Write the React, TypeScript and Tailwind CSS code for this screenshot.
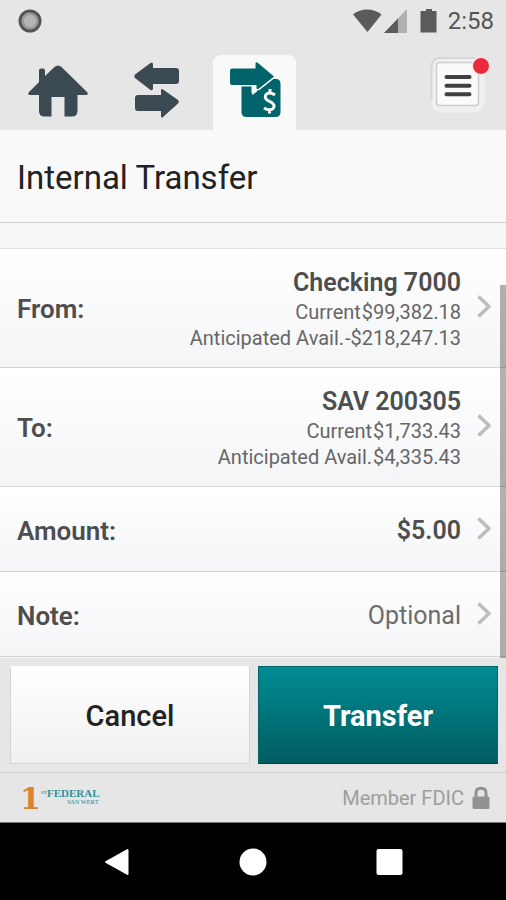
import type { ReactNode } from "react";

interface Balance {
  label: string;
  amount: string;
}

interface AccountRowProps {
  label: string;
  name: string;
  balances: Balance[];
}

const fromBalances: Balance[] = [
  { label: "Current", amount: "$99,382.18" },
  { label: "Anticipated Avail.", amount: "-$218,247.13" },
];

const toBalances: Balance[] = [
  { label: "Current", amount: "$1,733.43" },
  { label: "Anticipated Avail.", amount: "$4,335.43" },
];

function StatusBar() {
  return (
    <div className="flex h-[42px] items-center justify-between pl-[18px] pr-3">
      <svg className="h-6 w-6" viewBox="0 0 24 24" aria-hidden="true">
        <circle cx="12" cy="12" r="10" fill="#a9a9a9" stroke="#555" strokeWidth="3" />
        <circle cx="12" cy="12" r="7" fill="#b4b4b4" stroke="#959595" strokeWidth="1.500" />
      </svg>
      <div className="flex items-center">
        <svg className="h-6 w-[88px]" viewBox="0 0 88 24" aria-hidden="true">
          <path d="M1 5.500C9-1.200 21-1.200 29.500 5.500L15.500 23Z" fill="#5b5b5b" />
          <path d="M55 0V24H32Z" fill="#b0b0b0" />
          <path d="M46 9.400V24H32Z" fill="#5b5b5b" />
          <path d="M74 0h6v2h4.500v21.500h-16V2H74Z" fill="#5b5b5b" />
        </svg>
        <span className="ml-2 text-2xl text-[#555]">2:58</span>
      </div>
    </div>
  );
}

function TopTabs() {
  return (
    <nav className="flex h-[88px] items-end">
      <a href="#home" aria-label="Home" className="ml-[27px] mb-[13px]">
        <svg className="h-[54px] w-[62px]" viewBox="0 0 62 54">
          <path
            d="M12 19V7.500Q12 5.500 14 5.500H16Q18 5.500 18 7.500V13L27.500 4Q31 0.800 34.500 4L60 29Q62 32 59 32H50.500V48Q50.500 53.500 45 53.500H37.500V34H24.500V53.500H17.500Q12 53.500 12 48V32H3Q0 32 2 29Z"
            fill="#3b4953"
          />
        </svg>
      </a>
      <a href="#transfers" aria-label="Transfers" className="ml-11 mb-3">
        <svg className="h-[58px] w-12" viewBox="0 0 48 58">
          <path
            d="M2 14.500Q0.500 16.500 2 18L17.500 30Q20 31 20 28.500V24H43Q46 24 46 21V11Q46 8 43 8H20V4.500Q20 1.500 17.500 3Z"
            fill="#3b4953"
          />
          <path
            d="M45 43.500Q46.500 41.500 45 40L30 29.500Q28 28 28 30.500V35H5Q2 35 2 38V48Q2 51 5 51H28V56Q28 58.500 30 57Z"
            fill="#3b4953"
          />
        </svg>
      </a>
      <a
        href="#internal-transfer"
        aria-label="Internal transfer"
        aria-current="page"
        className="ml-8 flex h-[75px] w-[83px] items-start justify-center rounded-t-lg bg-[#f9f9f9] pt-1"
      >
        <svg className="h-[60px] w-[54px]" viewBox="0 0 54 60">
          <path
            d="M13.500 27H36L45 20H48Q52.500 20 52.500 25V53Q52.500 58 47.500 58H18.500Q13.500 58 13.500 53Z"
            fill="#00646a"
          />
          <path d="M23.500 26H29V32.500L24.500 36L23.500 33Z" fill="#f9f9f9" />
          <path
            d="M4 9.500H27.500V4.500Q28 2.500 30 4L46 17.500L31 29.500Q28.500 31 28.500 28.500V26H4Q2 26 2 24V11.500Q2 9.500 4 9.500Z"
            fill="#00646a"
            stroke="#f9f9f9"
            strokeWidth="3"
            paintOrder="stroke"
          />
          <path
            d="M47 36Q42 32.500 38.500 35Q35.500 38.500 39.500 41.200L44 43.800Q48 47 44.500 50Q40.500 52 36 49M42 30V34.500M41.500 50.500V54.500"
            fill="none"
            stroke="#f9f9f9"
            strokeWidth="3"
          />
        </svg>
      </a>
      <button type="button" aria-label="Menu" className="relative mb-[17px] ml-auto mr-5">
        <svg className="h-[58px] w-[60px]" viewBox="0 0 60 58">
          <rect x="5" y="2.500" width="53.500" height="55" rx="10" fill="#f0f0f0" />
          <path d="M5.500 46V13Q5.500 3 15 3H49" fill="none" stroke="#d6d6d6" strokeWidth="2" />
          <rect x="10.500" y="7.500" width="42" height="43" rx="3" fill="#fafafa" stroke="#cdcdcd" strokeWidth="1.500" />
          <path
            d="M20.500 22H43.500M20.500 30.700H43.500M20.500 39.300H43.500"
            stroke="#404040"
            strokeWidth="4"
            strokeLinecap="round"
          />
        </svg>
        <span className="absolute -right-1 top-0.5 h-[18px] w-[18px] rounded-full border border-[#f4f4f4] bg-[#e92b3c]" />
      </button>
    </nav>
  );
}

function Chevron() {
  return (
    <svg className="h-6 w-4 shrink-0" viewBox="0 0 16 24" aria-hidden="true">
      <path
        d="M2.500 1.500L13 11.500L2.500 21.500"
        fill="none"
        stroke="#bdbdbd"
        strokeWidth="3.600"
        strokeLinejoin="round"
      />
    </svg>
  );
}

function Row({ label, className, children }: { label: string; className: string; children: ReactNode }) {
  return (
    <button
      type="button"
      className={`flex w-full items-center border-b border-[#d3d5d6] bg-linear-to-b from-white to-[#f4f5f7] pl-[17px] pr-[14px] text-left text-[#4e4e4e] ${className}`}
    >
      <span className="pt-1 text-[26px] leading-8 font-semibold">{label}</span>
      <span className="ml-auto mr-[15px] pt-1 text-right">{children}</span>
      <Chevron />
    </button>
  );
}

function AccountRow({ label, name, balances }: AccountRowProps) {
  return (
    <Row label={label} className="pt-[14px] pb-4">
      <span className="block text-[25px] leading-8 font-semibold">{name}</span>
      {balances.map((b) => (
        <span key={b.label} className="flex justify-end gap-px text-[20px] leading-[26px] text-[#666]">
          <span>{b.label}</span>
          <span>{b.amount}</span>
        </span>
      ))}
    </Row>
  );
}

function BankLogo() {
  return (
    <svg className="h-9 w-20" viewBox="0 0 80 36" role="img" aria-label="1st Federal Van Wert">
      <text x="0" y="29" fontFamily="'DejaVu Serif', serif" fontWeight="700" fontSize="30" fill="#df8230">
        1
      </text>
      <g fontFamily="'Liberation Serif', serif" fontWeight="700">
        <text x="21" y="14" fontSize="5" fill="#3d98a0">ST</text>
        <text x="27" y="17" fontSize="11" fill="#2f929b">FEDERAL</text>
        <text x="47" y="24" fontSize="6" fill="#58a5ab">VAN WERT</text>
      </g>
    </svg>
  );
}

export default function App() {
  return (
    <div className="flex min-h-screen w-full flex-col bg-[#e6e6e6] font-['Roboto',sans-serif]">
      <StatusBar />
      <TopTabs />

      <header className="border-b border-[#cfd1d2] bg-[#f9f9f9] px-[17px] pt-7 pb-6">
        <h1 className="text-[33px] leading-10 text-[#222]">Internal Transfer</h1>
      </header>

      <main className="relative flex-1 bg-[#f5f6f8]">
        <div className="h-[26px] border-b border-[#dedfe0]" />
        <AccountRow label="From:" name="Checking 7000" balances={fromBalances} />
        <AccountRow label="To:" name="SAV 200305" balances={toBalances} />
        <Row label="Amount:" className="h-[85px]">
          <span className="block text-[25px] leading-8 font-semibold">$5.00</span>
        </Row>
        <Row label="Note:" className="h-[85px]">
          <span className="block text-[25px] leading-8 text-[#6c6c6c]">Optional</span>
        </Row>
        {/* Scroll thumb over the list */}
        <div className="absolute top-[62px] right-0 bottom-0 w-1.5 bg-black/30" />
      </main>

      <div className="flex gap-2 px-2 pt-2 pb-2 pl-[10px]">
        <button
          type="button"
          className="h-[98px] flex-1 border border-[#d4d4d4] border-t-white bg-linear-to-b from-white to-[#f0f0f0] pt-1 text-[29px] font-medium text-[#222]"
        >
          Cancel
        </button>
        <button
          type="button"
          className="h-[98px] flex-1 border border-[#006469] border-b-[#003f43] bg-linear-to-b from-[#008d93] to-[#005c61] pt-1 text-[29px] font-bold text-white"
        >
          Transfer
        </button>
      </div>

      <footer className="flex h-[50px] items-center justify-between border-t border-[#cdcdcd] pr-4 pl-5">
        <BankLogo />
        <div className="flex items-center gap-2 text-[20px] text-[#9d9d9d]">
          Member FDIC
          <svg className="h-6 w-[18px]" viewBox="0 0 18 24" aria-hidden="true">
            <path d="M4 12V7Q4 2.200 9 2.200T14 7V12" fill="none" stroke="#929292" strokeWidth="3" />
            <rect x="0.500" y="10.500" width="17" height="12.500" rx="1.500" fill="#929292" />
          </svg>
        </div>
      </footer>

      <nav className="flex h-[78px] items-center justify-between border-t border-[#777] bg-black px-[103px]">
        <button type="button" aria-label="Back">
          <svg className="h-7 w-7" viewBox="0 0 28 28">
            <path d="M3 14L24.500 2V26Z" fill="#fff" stroke="#fff" strokeWidth="2" strokeLinejoin="round" />
          </svg>
        </button>
        <button type="button" aria-label="Home screen">
          <svg className="h-7 w-7" viewBox="0 0 28 28">
            <circle cx="14" cy="14" r="13.500" fill="#fff" />
          </svg>
        </button>
        <button type="button" aria-label="Recent apps">
          <svg className="h-7 w-7" viewBox="0 0 28 28">
            <rect x="1.500" y="1" width="26" height="26" rx="2" fill="#fff" />
          </svg>
        </button>
      </nav>
    </div>
  );
}
